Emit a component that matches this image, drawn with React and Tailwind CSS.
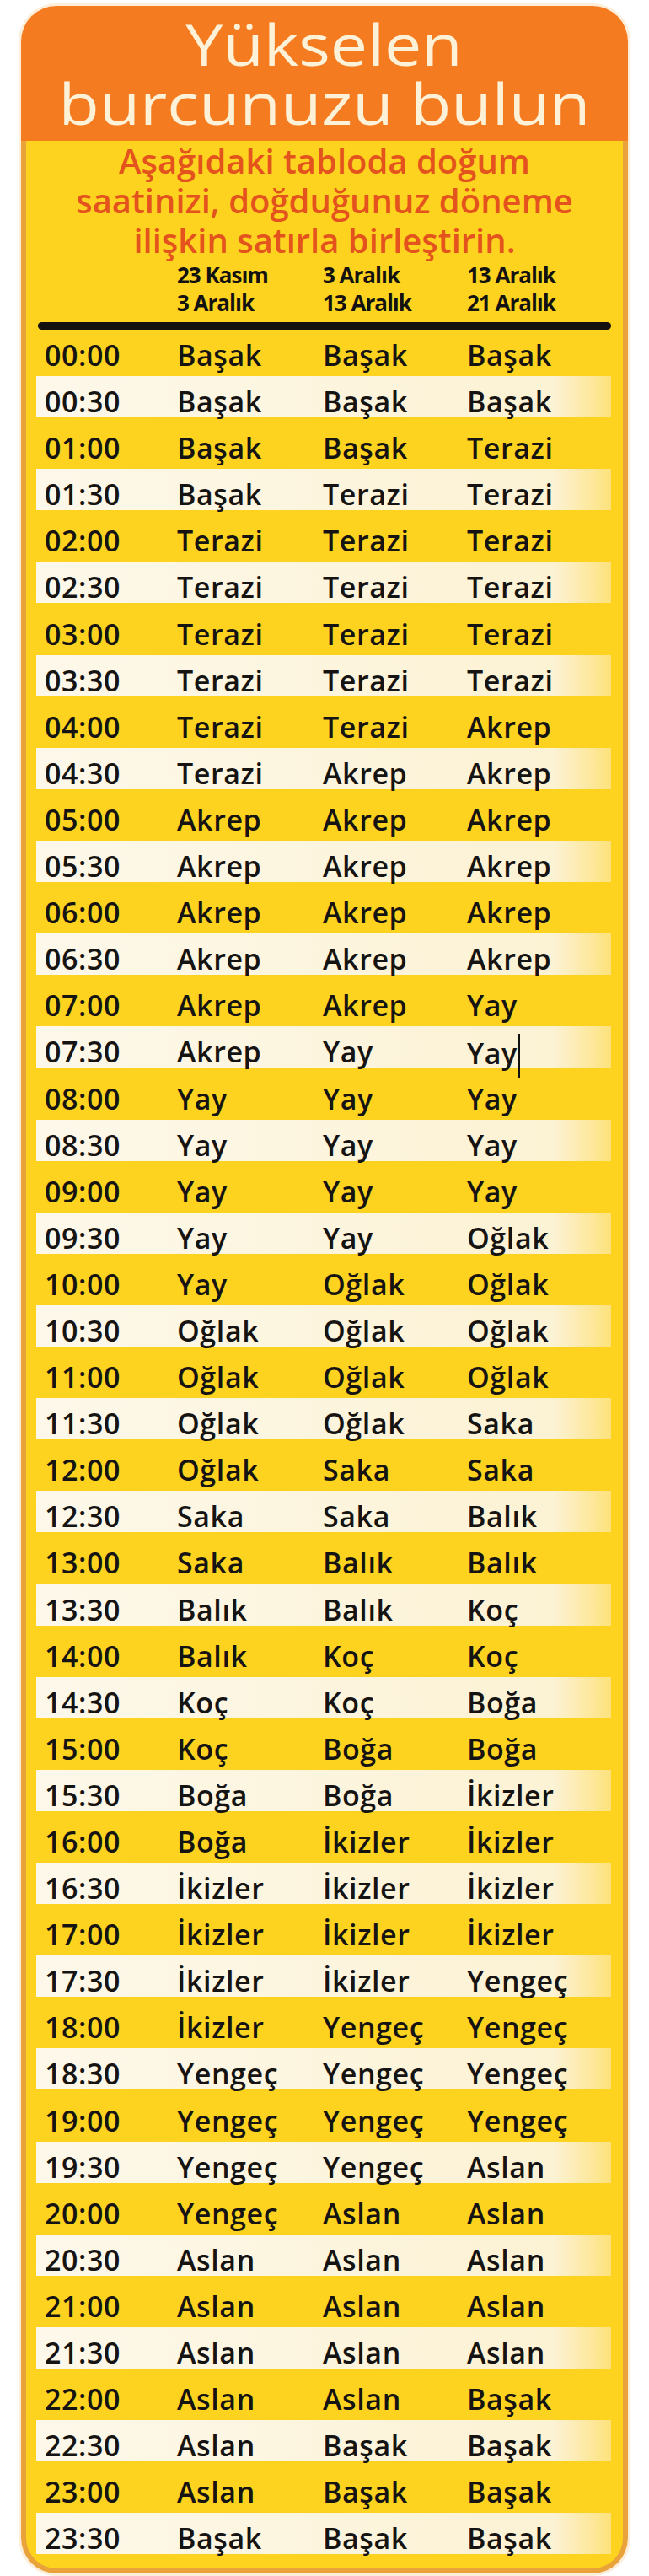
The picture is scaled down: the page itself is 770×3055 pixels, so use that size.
const rows = [
  ["00:00", "Başak", "Başak", "Başak"],
  ["00:30", "Başak", "Başak", "Başak"],
  ["01:00", "Başak", "Başak", "Terazi"],
  ["01:30", "Başak", "Terazi", "Terazi"],
  ["02:00", "Terazi", "Terazi", "Terazi"],
  ["02:30", "Terazi", "Terazi", "Terazi"],
  ["03:00", "Terazi", "Terazi", "Terazi"],
  ["03:30", "Terazi", "Terazi", "Terazi"],
  ["04:00", "Terazi", "Terazi", "Akrep"],
  ["04:30", "Terazi", "Akrep", "Akrep"],
  ["05:00", "Akrep", "Akrep", "Akrep"],
  ["05:30", "Akrep", "Akrep", "Akrep"],
  ["06:00", "Akrep", "Akrep", "Akrep"],
  ["06:30", "Akrep", "Akrep", "Akrep"],
  ["07:00", "Akrep", "Akrep", "Yay"],
  ["07:30", "Akrep", "Yay", "Yay"],
  ["08:00", "Yay", "Yay", "Yay"],
  ["08:30", "Yay", "Yay", "Yay"],
  ["09:00", "Yay", "Yay", "Yay"],
  ["09:30", "Yay", "Yay", "Oğlak"],
  ["10:00", "Yay", "Oğlak", "Oğlak"],
  ["10:30", "Oğlak", "Oğlak", "Oğlak"],
  ["11:00", "Oğlak", "Oğlak", "Oğlak"],
  ["11:30", "Oğlak", "Oğlak", "Saka"],
  ["12:00", "Oğlak", "Saka", "Saka"],
  ["12:30", "Saka", "Saka", "Balık"],
  ["13:00", "Saka", "Balık", "Balık"],
  ["13:30", "Balık", "Balık", "Koç"],
  ["14:00", "Balık", "Koç", "Koç"],
  ["14:30", "Koç", "Koç", "Boğa"],
  ["15:00", "Koç", "Boğa", "Boğa"],
  ["15:30", "Boğa", "Boğa", "İkizler"],
  ["16:00", "Boğa", "İkizler", "İkizler"],
  ["16:30", "İkizler", "İkizler", "İkizler"],
  ["17:00", "İkizler", "İkizler", "İkizler"],
  ["17:30", "İkizler", "İkizler", "Yengeç"],
  ["18:00", "İkizler", "Yengeç", "Yengeç"],
  ["18:30", "Yengeç", "Yengeç", "Yengeç"],
  ["19:00", "Yengeç", "Yengeç", "Yengeç"],
  ["19:30", "Yengeç", "Yengeç", "Aslan"],
  ["20:00", "Yengeç", "Aslan", "Aslan"],
  ["20:30", "Aslan", "Aslan", "Aslan"],
  ["21:00", "Aslan", "Aslan", "Aslan"],
  ["21:30", "Aslan", "Aslan", "Aslan"],
  ["22:00", "Aslan", "Aslan", "Başak"],
  ["22:30", "Aslan", "Başak", "Başak"],
  ["23:00", "Aslan", "Başak", "Başak"],
  ["23:30", "Başak", "Başak", "Başak"],
];

function Row({ r, i }) {
  const white = i % 2 === 1;
  return (
    <div className="h-[55.1px]">
      <div
        className={
          "h-[49px] ml-[12px] mr-[14px] " +
          (white
            ? "bg-linear-to-r from-[#fdf8ea] via-[#fcf2d4] via-90% to-[#fde27a]"
            : "")
        }
      >
        <div className="grid grid-cols-[157px_173px_171px_1fr] pl-[10px] pt-[3px] text-[34px] leading-[55px] font-semibold tracking-[0.6px] text-[#161412] whitespace-nowrap">
          <span>{r[0]}</span>
          <span>{r[1]}</span>
          <span>{r[2]}</span>
          <span className="flex items-center">
            {r[3]}
            {r[0] === "07:30" && (
              <span className="inline-block w-[2px] h-[52px] bg-[#111] ml-[1px] mt-[6px]"></span>
            )}
          </span>
        </div>
      </div>
    </div>
  );
}

export default function App() {
  return (
    <div className="bg-white min-h-[3055px] pt-[7px] font-['Open_Sans','Noto_Sans',sans-serif]">
      <div className="ml-[25px] w-[720px] rounded-[42px] shadow-[0_0_0_3px_#fdeeda]">
        {/* header */}
        <div className="bg-[#f47b20] rounded-t-[42px] pt-[10px] pb-[10px] text-center text-[#fdf1d8] text-[68px] leading-[70px] font-normal">
          <div>
            <span className="inline-block scale-x-[1.16]">Yükselen</span>
          </div>
          <div>
            <span className="inline-block scale-x-[1.16]">burcunuzu bulun</span>
          </div>
        </div>
        {/* body */}
        <div className="bg-[#fdd31f] border-x-[6px] border-b-[6px] border-[#eaa23a] rounded-b-[42px] pb-[10px]">
          <div className="text-center text-[#e4531d] text-[40px] leading-[47px] font-semibold whitespace-nowrap">
            <div>Aşağıdaki tabloda doğum</div>
            <div>saatinizi, doğduğunuz döneme</div>
            <div>ilişkin satırla birleştirin.</div>
          </div>
          <div className="mt-[2px] ml-[12px] mr-[14px] grid grid-cols-[157px_173px_171px_1fr] pl-[10px] text-[26px] leading-[33px] font-bold tracking-[-1px] text-[#141210] whitespace-nowrap">
            <span></span>
            <span>23 Kasım</span>
            <span>3 Aralık</span>
            <span>13 Aralık</span>
            <span></span>
            <span>3 Aralık</span>
            <span>13 Aralık</span>
            <span>21 Aralık</span>
          </div>
          <div className="mt-[6px] ml-[14px] mr-[14px] h-[9px] rounded-full bg-[#121110]"></div>
          <div>
            {rows.map((r, i) => (
              <Row key={r[0]} r={r} i={i} />
            ))}
          </div>
        </div>
      </div>
    </div>
  );
}
